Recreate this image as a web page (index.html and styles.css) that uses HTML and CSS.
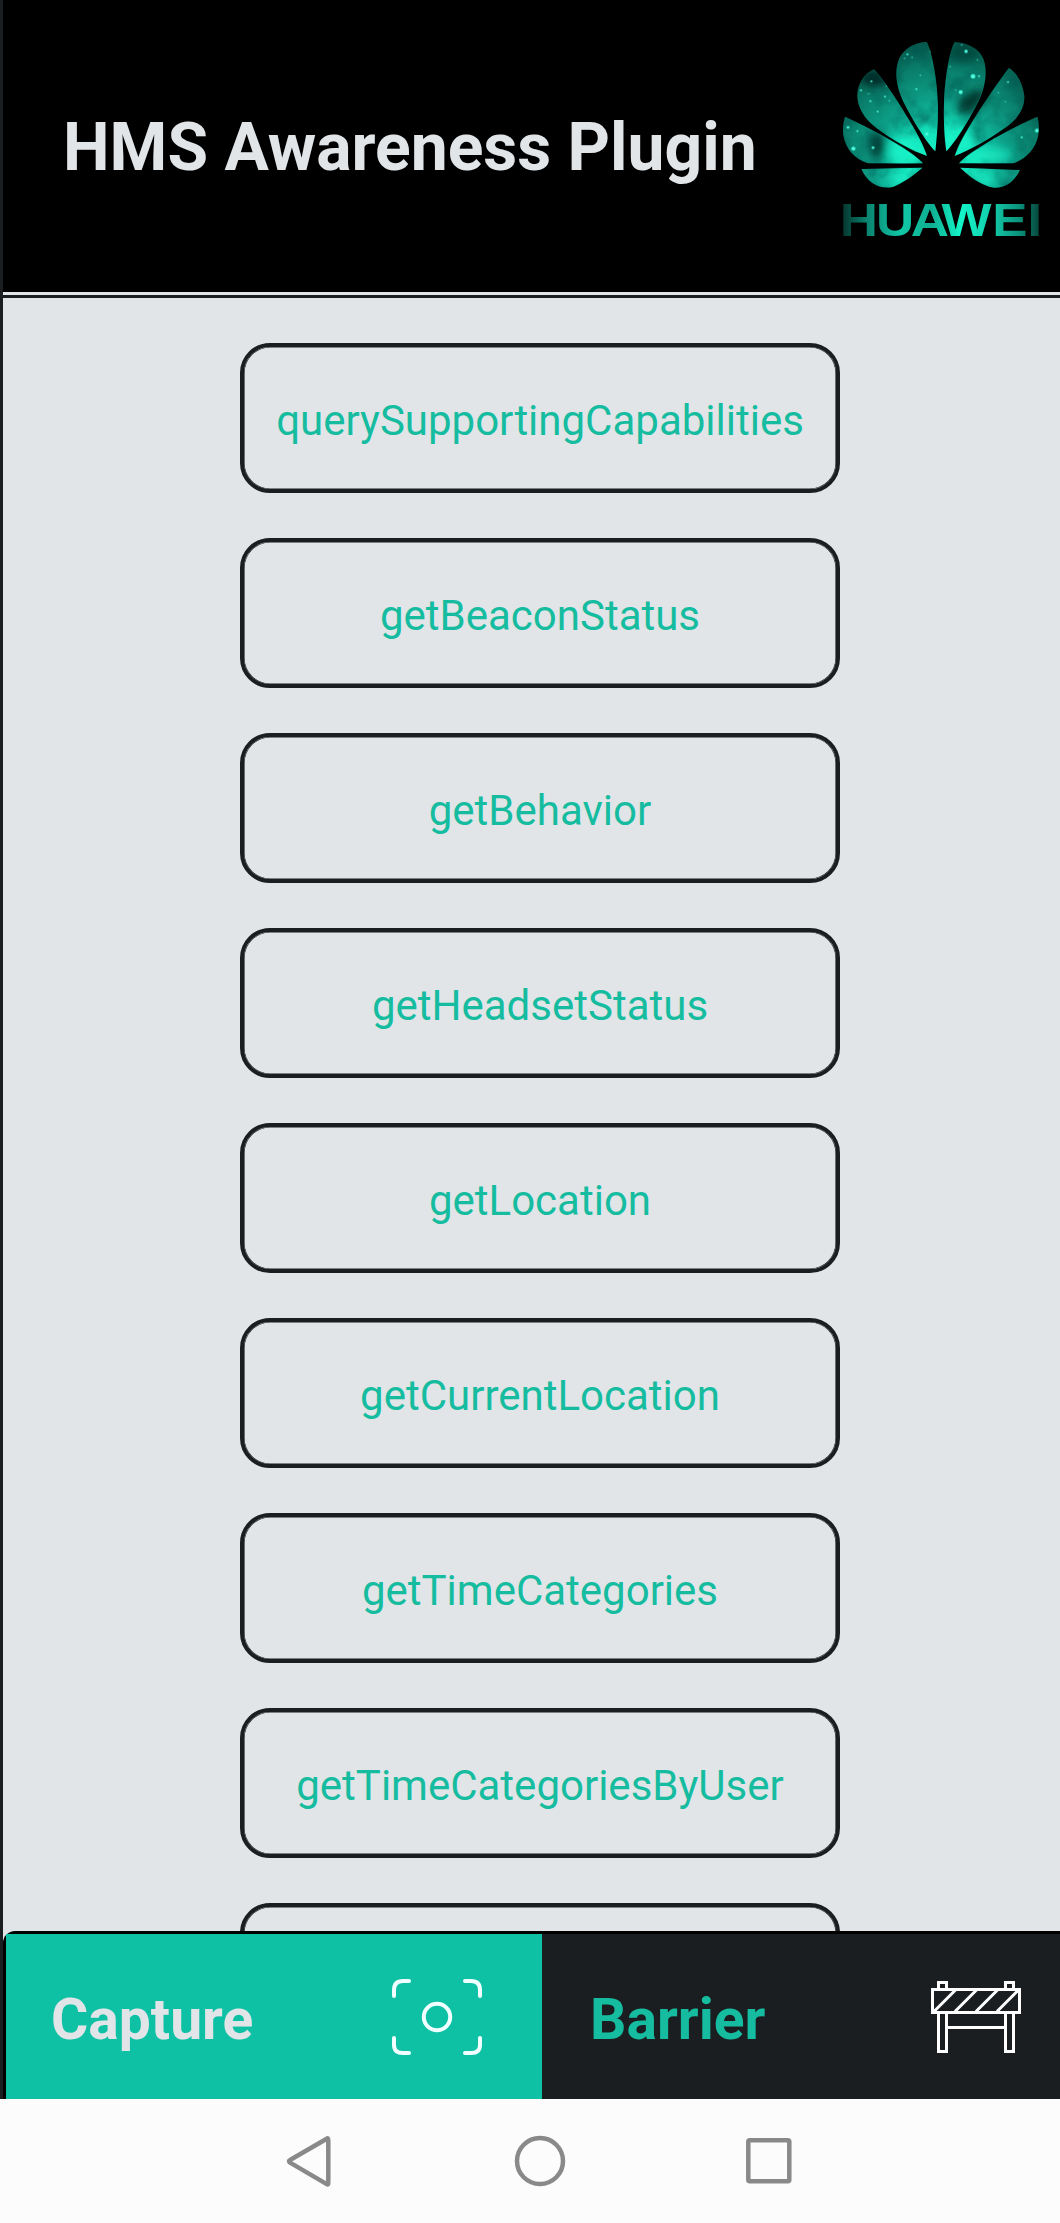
FILE: index.html
```html
<!DOCTYPE html>
<html lang="en">
<head>
<meta charset="utf-8">
<title>HMS Awareness Plugin</title>
<link rel="stylesheet" href="styles.css">
</head>
<body>
<div class="app">
  <header class="header">
    <h1 class="title">HMS Awareness Plugin</h1>
    <svg class="logo" viewBox="0 0 720 720" role="img" aria-label="HUAWEI">
      <defs>
        <radialGradient id="glow" gradientUnits="userSpaceOnUse" cx="360" cy="440" r="390">
          <stop offset="0" stop-color="#18ffd2"/>
          <stop offset=".3" stop-color="#13dfb8"/>
          <stop offset=".52" stop-color="#0da089"/>
          <stop offset=".8" stop-color="#097a67"/>
          <stop offset="1" stop-color="#065347"/>
        </radialGradient>
        <linearGradient id="word" gradientUnits="userSpaceOnUse" x1="60" y1="0" x2="572" y2="0">
          <stop offset="0" stop-color="#06362f"/>
          <stop offset=".12" stop-color="#0a8370"/>
          <stop offset=".3" stop-color="#10c9a6"/>
          <stop offset=".45" stop-color="#0fae92"/>
          <stop offset=".6" stop-color="#14f5c8"/>
          <stop offset=".75" stop-color="#12cfad"/>
          <stop offset=".9" stop-color="#0b927b"/>
          <stop offset="1" stop-color="#06463c"/>
        </linearGradient>
        <filter id="soft" x="-50%" y="-50%" width="200%" height="200%"><feGaussianBlur stdDeviation="14"/></filter>
        <filter id="cloud" x="0" y="0" width="100%" height="100%">
          <feTurbulence type="fractalNoise" baseFrequency=".012" numOctaves="4" seed="7"/>
          <feColorMatrix values="0 0 0 0 0  0 0 0 0 .08  0 0 0 0 .07  2.6 0 0 0 -1.15"/>
        </filter>
        <clipPath id="petals">
          <path d="M320 65C334 90 352 170 354 260C354 315 350 355 346 394C322 370 280 305 250 245C228 200 222 150 238 115C252 85 284 67 320 65Z"/>
          <path d="M404 66C440 68 474 84 488 112C504 145 498 198 476 243C448 300 406 365 379 394C374 350 370 310 372 250C375 170 388 95 404 66Z"/>
          <path d="M162 148C187 174 225 230 258 285C286 330 310 372 321 408C280 393 215 360 170 325C130 295 110 257 112 222C114 190 132 162 162 148Z"/>
          <path d="M567 143C593 160 609 192 613 228C614 265 594 296 556 323C510 356 450 389 404 408C415 376 440 331 466 290C500 237 537 182 567 143Z"/>
          <path d="M75 290C125 313 190 345 240 378C270 397 297 416 309 430H145C103 417 76 386 70 345C67 323 71 303 75 290Z"/>
          <path d="M652 290C657 306 658 330 654 350C646 386 618 417 580 430H417C433 411 465 391 500 369C550 338 605 311 652 290Z"/>
          <path d="M124 447L307 443C283 464 247 490 220 500C185 510 145 494 124 447Z"/>
          <path d="M420 443L600 450C584 484 556 505 522 503C486 498 446 467 420 443Z"/>
        </clipPath>
      </defs>
      <g clip-path="url(#petals)">
        <rect width="720" height="720" fill="url(#glow)"/>
        <rect width="720" height="520" filter="url(#cloud)" opacity=".55"/>
        <g filter="url(#soft)">
          <ellipse cx="165" cy="175" rx="45" ry="24" fill="#02201c" opacity=".9"/>
          <ellipse cx="455" cy="245" rx="50" ry="26" fill="#02201c" opacity=".8" transform="rotate(-35 455 245)"/>
          <ellipse cx="172" cy="378" rx="26" ry="42" fill="#032d27" opacity=".8"/>
          <ellipse cx="430" cy="100" rx="50" ry="30" fill="#043f36" opacity=".7"/>
          <ellipse cx="250" cy="395" rx="45" ry="48" fill="#18f5ca" opacity=".8"/>
          <ellipse cx="415" cy="355" rx="48" ry="38" fill="#18f5ca" opacity=".8"/>
          <ellipse cx="510" cy="405" rx="70" ry="22" fill="#18f5ca" opacity=".65"/>
          <ellipse cx="240" cy="475" rx="40" ry="22" fill="#18f5ca" opacity=".7"/>
          <ellipse cx="480" cy="472" rx="40" ry="22" fill="#18f5ca" opacity=".7"/>
        </g>
        <g fill="#4dffe0">
          <circle cx="459" cy="169" r="7"/><circle cx="477" cy="168" r="3"/><circle cx="422" cy="216" r="6"/>
          <circle cx="438" cy="94" r="5"/><circle cx="100" cy="386" r="6"/><circle cx="159" cy="383" r="4"/>
          <circle cx="84" cy="322" r="4"/><circle cx="112" cy="333" r="3"/><circle cx="651" cy="332" r="6"/>
          <circle cx="320" cy="342" r="5"/><circle cx="333" cy="94" r="3"/><circle cx="262" cy="103" r="3"/>
          <circle cx="254" cy="115" r="2"/><circle cx="276" cy="112" r="2"/><circle cx="289" cy="207" r="3"/>
          <circle cx="301" cy="166" r="2"/><circle cx="154" cy="184" r="3"/><circle cx="123" cy="211" r="3"/>
          <circle cx="146" cy="221" r="2"/><circle cx="151" cy="243" r="3"/><circle cx="195" cy="230" r="3"/>
          <circle cx="199" cy="198" r="2"/><circle cx="208" cy="242" r="2"/><circle cx="173" cy="275" r="3"/>
          <circle cx="390" cy="140" r="2"/><circle cx="407" cy="210" r="2"/><circle cx="564" cy="186" r="3"/>
          <circle cx="535" cy="218" r="2"/><circle cx="556" cy="245" r="2"/><circle cx="605" cy="352" r="3"/>
          <circle cx="472" cy="120" r="2"/><circle cx="425" cy="75" r="2"/>
        </g>
      </g>
      <text class="logo-word" transform="translate(0 648) scale(1.15 1)" x="51.4 146 236.5 317 449.6 541" fill="url(#word)">HUAWEI</text>
    </svg>
  </header>

  <main class="list">
    <button class="item">querySupportingCapabilities</button>
    <button class="item">getBeaconStatus</button>
    <button class="item">getBehavior</button>
    <button class="item">getHeadsetStatus</button>
    <button class="item">getLocation</button>
    <button class="item">getCurrentLocation</button>
    <button class="item">getTimeCategories</button>
    <button class="item">getTimeCategoriesByUser</button>
    <button class="item"></button>
  </main>

  <div class="tabs">
    <div class="tab tab-active">
      <span>Capture</span>
      <svg class="tab-icon" viewBox="0 0 90 90" fill="none" stroke="#f0ffff" stroke-width="4" stroke-linecap="round">
        <path d="M2 24V18Q2 9 11 9H17M73 9H79Q88 9 88 18V24M88 66V73Q88 81 79 81H73M17 81H11Q2 81 2 73V66"/>
        <circle cx="45" cy="45" r="13.200"/>
      </svg>
    </div>
    <div class="tab">
      <span>Barrier</span>
      <svg class="tab-icon" viewBox="0 0 90 90" fill="none" stroke="#fff" stroke-width="3">
        <path d="M1.500 17.500H88.500V40.500H1.500ZM7.500 17.500V10.500H15.500V17.500M74.500 17.500V10.500H82.500V17.500M7.500 40.500V79.500H15.500V40.500M74.500 40.500V79.500H82.500V40.500M16 55.500H74M3 39.500L25 17.500M24 39.500L46 17.500M45 39.500L67 17.500M66 39.500L88 17.500"/>
      </svg>
    </div>
  </div>
</div>

<nav class="navbar">
  <svg class="nav-icon" viewBox="0 0 54 54"><path d="M45.700 4.800Q47.300 3.600 47.300 6.500V48.500Q47.300 51.300 45.700 50L9.500 28.900Q6.500 27.300 9.500 25.700Z"/></svg>
  <svg class="nav-icon" viewBox="0 0 54 54"><circle cx="28" cy="27" r="23"/></svg>
  <svg class="nav-icon" viewBox="0 0 54 54"><rect x="6.300" y="6.300" width="41" height="41" rx="1.500"/></svg>
</nav>
</body>
</html>
```
FILE: styles.css
```css
* { box-sizing: border-box; }

body {
  margin: 0;
  width: 1060px;
  height: 2223px;
  overflow: hidden;
  background: #fcfcfc;
  font-family: Roboto, "Liberation Sans", sans-serif;
}

.app {
  display: flex;
  flex-direction: column;
  height: 2099px;
  background: #e1e5e8;
  border-left: 3px solid #1a1e21;
}

.header {
  display: flex;
  align-items: flex-start;
  justify-content: space-between;
  height: 292px;
  flex: none;
  padding: 20px 0 0 60px;
  background: #000;
}

.title {
  margin: 89px 0 0;
  color: #e1e5e8;
  font-size: 66px;
  line-height: 78px;
  font-weight: 700;
  white-space: nowrap;
}

.logo {
  width: 240px;
  height: 240px;
  flex: none;
}

.logo-word {
  font: 700 138px "Liberation Sans", Arial, sans-serif;
}

.list {
  display: flex;
  flex: 1;
  flex-direction: column;
  align-items: center;
  gap: 45px;
  min-height: 0;
  margin-top: 3px;
  padding: 45px 0 0 17px;
  overflow: hidden;
  border-top: 3px solid #1a1e21;
}

.item {
  flex: none;
  width: 600px;
  height: 150px;
  padding: 6px 0 0;
  color: #16bc9f;
  background: transparent;
  border: 4px solid #1a1e21;
  border-radius: 30px;
  box-shadow: inset 0 0 0 0.6px #1a1e21;
  font: 400 42px/50px Roboto, "Liberation Sans", sans-serif;
}

.tabs {
  display: flex;
  flex: none;
  height: 168px;
  background: #1a1e21;
  border: solid #000;
  border-width: 3px 0 0 3px;
  border-top-left-radius: 12px;
}

.tab {
  display: flex;
  flex: 0 0 536px;
  align-items: center;
  justify-content: space-between;
  padding: 0 57px 0 48px;
  color: #16bc9f;
  font-size: 57px;
  line-height: 66px;
  font-weight: 700;
}

.tab span { padding-top: 6px; }

.tab-active {
  padding: 0 60px 0 45px;
  color: #e1e5e8;
  background: #0fc1a4;
}

.tab-icon {
  width: 90px;
  height: 90px;
}

.navbar {
  display: flex;
  justify-content: space-between;
  padding: 35px 264px 0 281px;
}

.nav-icon {
  width: 54px;
  height: 54px;
  fill: none;
  stroke: #898989;
  stroke-width: 4.500;
}
```
